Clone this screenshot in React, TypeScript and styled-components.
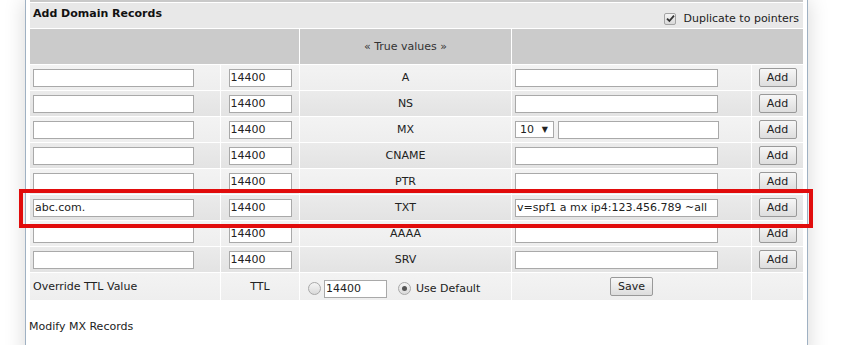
import React from "react";
import styled, { createGlobalStyle } from "styled-components";

const Global = createGlobalStyle`
  html, body { margin: 0; padding: 0; background: #ffffff; overflow: hidden; }
  body { font-family: "DejaVu Sans", Verdana, sans-serif; font-size: 11px; color: #222; }
  * { box-sizing: border-box; }
`;

const Page = styled.div`
  width: 847px;
  height: 345px;
  overflow: hidden;
  background: #fff;
`;

const Panel = styled.div`
  margin-left: 25px;
  width: 783px;
  height: 360px;
  background: #fff;
  border-left: 1px solid #9fb1c3;
  border-right: 1px solid #9fb1c3;
  box-shadow: 0 0 20px rgba(0, 0, 0, 0.16);
  padding: 0 4px;
`;

const TopLine = styled.div`
  height: 2px;
  background: #c9c9c9;
  margin-bottom: 1px;
`;

const TitleBar = styled.div`
  height: 25px;
  background: #e8e8e8;
  display: flex;
  align-items: center;
  justify-content: space-between;
  padding: 0 4px 0 3px;
  margin-bottom: 1px;
`;

const Title = styled.span`
  font-weight: bold;
  font-size: 11px;
  color: #111;
  position: relative;
  top: -2px;
`;

const CheckLabel = styled.label`
  display: flex;
  align-items: center;
  gap: 7px;
  position: relative;
  top: 3px;
  color: #222;
`;

const CheckBox = styled.span`
  width: 12px;
  height: 12px;
  border: 1px solid #a3a3a3;
  border-radius: 2px;
  background: linear-gradient(#f4f4f4, #d9d9d9);
  display: flex;
  align-items: center;
  justify-content: center;
`;

const Table = styled.div`
  display: flex;
  flex-direction: column;
  gap: 1px;
`;

const Row = styled.div<{ $h?: number }>`
  position: relative;
  display: grid;
  grid-template-columns: 190px 78px 211px 239px 51px;
  column-gap: 1px;
  height: ${(p) => p.$h ?? 25}px;
`;

const Cell = styled.div<{ $span?: number; $tone: "head" | "light" | "dark"; $align?: "left" | "center" }>`
  grid-column: span ${(p) => p.$span ?? 1};
  display: flex;
  align-items: center;
  justify-content: ${(p) => (p.$align === "left" ? "flex-start" : "center")};
  padding-left: ${(p) => (p.$align === "left" ? "3px" : "0")};
  background: ${(p) =>
    p.$tone === "head"
      ? "#cbcbcb"
      : p.$tone === "light"
      ? "linear-gradient(#f3f3f3, #eeeeee)"
      : "linear-gradient(#ebebeb, #e3e3e3)"};
  color: #222;
  white-space: nowrap;
`;

const HeadText = styled.span`
  color: #333;
  font-size: 11px;
`;

const TextInput = styled.input<{ $w: number }>`
  width: ${(p) => p.$w}px;
  height: 18px;
  border: 1px solid #a9a9a9;
  background: #fff;
  font-family: "DejaVu Sans", Verdana, sans-serif;
  font-size: 11px;
  color: #222;
  padding: 0 1px;
  margin: 0;
  outline: none;
`;

const Button = styled.button<{ $w: number }>`
  width: ${(p) => p.$w}px;
  height: 19px;
  border: 1px solid #999;
  border-radius: 2px;
  background: linear-gradient(#f7f7f7, #dddddd);
  font-family: "DejaVu Sans", Verdana, sans-serif;
  font-size: 11px;
  color: #222;
  padding: 0;
  margin: 0;
`;

const Select = styled.div`
  width: 39px;
  height: 17px;
  border: 1px solid #a9a9a9;
  background: #fff;
  display: flex;
  align-items: center;
  justify-content: space-between;
  padding: 0 5px 0 4px;
  font-size: 11px;
  color: #222;
  margin-right: 4px;
`;

const Arrow = styled.span`
  font-size: 8px;
  color: #222;
`;

const Radio = styled.span<{ $on?: boolean }>`
  width: 13px;
  height: 13px;
  border-radius: 50%;
  border: 1px solid #a8a8a8;
  background: linear-gradient(#f5f5f5, #dadada);
  display: inline-flex;
  align-items: center;
  justify-content: center;
  flex: none;
  &::after {
    content: "";
    width: 5px;
    height: 5px;
    border-radius: 50%;
    background: ${(p) => (p.$on ? "#555" : "transparent")};
  }
`;

const TtlGroup = styled.div`
  display: flex;
  align-items: center;
  padding-left: 5px;
  width: 100%;
  position: relative;
  top: 2px;
`;

const RadioInputGap = styled.span`
  width: 3px;
`;

const UseDefault = styled.label`
  display: flex;
  align-items: center;
  gap: 5px;
  margin-left: 11px;
`;

const Highlight = styled.div`
  position: absolute;
  z-index: 5;
  left: -11px;
  right: -10px;
  top: -6px;
  bottom: -8px;
  border: 4px solid #e10c0c;
  pointer-events: none;
`;

const Footer = styled.div`
  padding: 20px 0 0 0;
  margin-left: -1px;
  color: #222;
`;

type Rec = { type: string; name?: string; value?: string; mx?: boolean; hl?: boolean };

const records: Rec[] = [
  { type: "A" },
  { type: "NS" },
  { type: "MX", mx: true },
  { type: "CNAME" },
  { type: "PTR" },
  { type: "TXT", name: "abc.com.", value: "v=spf1 a mx ip4:123.456.789 ~all", hl: true },
  { type: "AAAA" },
  { type: "SRV" },
];

export default function App() {
  return (
    <Page>
      <Global />
      <Panel>
        <TopLine />
        <TitleBar>
          <Title>Add Domain Records</Title>
          <CheckLabel>
            <CheckBox>
              <svg width="9" height="9" viewBox="0 0 9 9">
                <path d="M1 4.6 L3.4 7 L8 1.6" fill="none" stroke="#333" strokeWidth="1.8" />
              </svg>
            </CheckBox>
            Duplicate to pointers
          </CheckLabel>
        </TitleBar>
        <Table>
          <Row $h={35}>
            <Cell $span={2} $tone="head" />
            <Cell $tone="head">
              <HeadText>« True values »</HeadText>
            </Cell>
            <Cell $span={2} $tone="head" />
          </Row>
          {records.map((r, i) => {
            const tone = i % 2 === 0 ? "light" : "dark";
            return (
              <Row key={r.type}>
                <Cell $tone={tone} $align="left">
                  <TextInput $w={161} defaultValue={r.name ?? ""} />
                </Cell>
                <Cell $tone={tone}>
                  <TextInput $w={63} defaultValue="14400" />
                </Cell>
                <Cell $tone={tone}>{r.type}</Cell>
                <Cell $tone={tone} $align="left">
                  {r.mx ? (
                    <>
                      <Select>
                        10 <Arrow>▼</Arrow>
                      </Select>
                      <TextInput $w={161} defaultValue="" />
                    </>
                  ) : (
                    <TextInput $w={203} defaultValue={r.value ?? ""} />
                  )}
                </Cell>
                <Cell $tone={tone}>
                  <Button $w={38}>Add</Button>
                </Cell>
                {r.hl && <Highlight />}
              </Row>
            );
          })}
          <Row $h={27}>
            <Cell $tone="light" $align="left">Override TTL Value</Cell>
            <Cell $tone="light">TTL</Cell>
            <Cell $tone="light" $align="left">
              <TtlGroup>
                <Radio />
                <RadioInputGap />
                <TextInput $w={63} defaultValue="14400" />
                <UseDefault>
                  <Radio $on />
                  Use Default
                </UseDefault>
              </TtlGroup>
            </Cell>
            <Cell $tone="light">
              <Button $w={43}>Save</Button>
            </Cell>
            <Cell $tone="light" />
          </Row>
        </Table>
        <Footer>Modify MX Records</Footer>
      </Panel>
    </Page>
  );
}
